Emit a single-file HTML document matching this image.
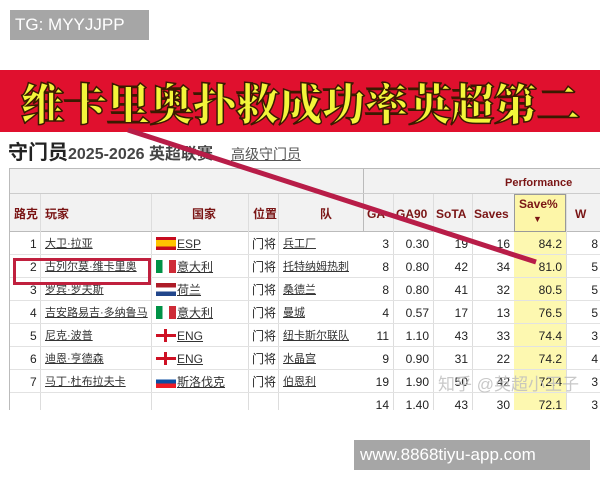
<!DOCTYPE html>
<html><head><meta charset="utf-8"><style>
*{margin:0;padding:0;box-sizing:border-box}
body{width:600px;height:480px;background:#fff;position:relative;overflow:hidden;font-family:"Liberation Sans","Noto Sans CJK SC",sans-serif}
.a{position:absolute}
.tg{left:10px;top:10px;width:139px;height:30px;background:#a6a6a6;color:#fff;font-size:17px;line-height:30px;padding-left:5px}
.ban{left:0;top:70px;width:600px;height:62px;background:#e0102e;color:#f3f53a;font-size:44px;font-weight:900;line-height:62px;text-align:center;letter-spacing:-1px;font-family:"Noto Serif CJK SC","Noto Sans CJK SC",serif;-webkit-text-stroke:1.5px #3a1a00;white-space:nowrap}
.tt{left:8px;top:136px;font-size:20px;font-weight:bold;color:#222;white-space:nowrap}
.tt span{font-size:16px;color:#444}
.tt u{font-size:14px;font-weight:normal;color:#555;margin-left:18px}
.tb{left:9px;top:168px;width:591px;height:242px;overflow:hidden;border-left:1px solid #bbb;border-top:1px solid #bbb}
.c{position:absolute;font-size:12px;line-height:14px;height:14px;color:#222;white-space:nowrap}
.h{color:#7a1515;font-weight:bold}
.l{text-decoration:underline;color:#333}
</style></head><body>
<div class="a tg">TG: MYYJJPP</div>
<div class="a ban">维卡里奥扑救成功率英超第二</div>
<div class="a tt">守门员<span>2025-2026 英超联赛</span><u>高级守门员</u></div>
<div class="a tb">
<div class="a" style="left:0;top:0;width:353px;height:63px;background:#f2f2f2;border-bottom:1px solid #bbb"></div>
<div class="a" style="left:0;top:24px;width:353px;height:1px;background:#ccc"></div>
<div class="a" style="left:353px;top:0;width:240px;height:63px;background:#f2f2f2;border-left:1px solid #bbb;border-bottom:1px solid #bbb"></div>
<div class="a" style="left:353px;top:24px;width:240px;height:1px;background:#ccc"></div>
<div class="a" style="left:504px;top:25px;width:52px;height:217px;background:#fdf8b0"></div>
<div class="a" style="left:504px;top:25px;width:52px;height:38px;border:1px solid #999;background:#fdf6a8"></div>
<div class="c h" style="left:495px;top:7px;font-size:11px">Performance</div>
<div class="c h" style="left:4px;top:38px">路克</div>
<div class="c h" style="left:35px;top:38px">玩家</div>
<div class="c h" style="left:182px;top:38px">国家</div>
<div class="c h" style="left:243px;top:38px">位置</div>
<div class="c h" style="left:310px;top:38px">队</div>
<div class="c h" style="left:357px;top:38px">GA</div>
<div class="c h" style="left:386px;top:38px">GA90</div>
<div class="c h" style="left:426px;top:38px">SoTA</div>
<div class="c h" style="left:464px;top:38px">Saves</div>
<div class="c h" style="left:509px;top:28px">Save%</div>
<div class="c h" style="left:523px;top:43px;font-size:9px">▼</div>
<div class="c h" style="left:565px;top:38px">W</div>
<div class="a" style="left:30px;top:25px;width:1px;height:220px;background:#ddd"></div>
<div class="a" style="left:141px;top:25px;width:1px;height:220px;background:#ddd"></div>
<div class="a" style="left:238px;top:25px;width:1px;height:220px;background:#ddd"></div>
<div class="a" style="left:268px;top:25px;width:1px;height:220px;background:#ddd"></div>
<div class="a" style="left:383px;top:25px;width:1px;height:220px;background:#ddd"></div>
<div class="a" style="left:423px;top:25px;width:1px;height:220px;background:#ddd"></div>
<div class="a" style="left:462px;top:25px;width:1px;height:220px;background:#ddd"></div>
<div class="a" style="left:556px;top:25px;width:1px;height:220px;background:#ddd"></div>
<div id="rows"></div>
</div>
<div class="a" style="left:13px;top:258px;width:138px;height:27px;border:3px solid #c0203e"></div>
<svg class="a" style="left:0;top:0" width="600" height="480"><line x1="128" y1="130" x2="536" y2="262" stroke="#b81d48" stroke-width="5"/></svg>
<div class="a" style="left:438px;top:370px;font-size:17px;color:rgba(190,190,190,.85);white-space:nowrap">知乎 @英超小王子</div>
<div class="a" style="left:354px;top:440px;width:236px;height:30px;background:#a6a6a6;color:#fff;font-size:17px;line-height:30px;padding-left:6px">www.8868tiyu-app.com</div>
<script>
var d=[["1","大卫·拉亚","ESP","兵工厂","3","0.30","19","16","84.2","8","es"],
["2","古列尔莫·维卡里奥","意大利","托特纳姆热刺","8","0.80","42","34","81.0","5","it"],
["3","罗宾·罗夫斯","荷兰","桑德兰","8","0.80","41","32","80.5","5","nl"],
["4","吉安路易吉·多纳鲁马","意大利","曼城","4","0.57","17","13","76.5","5","it"],
["5","尼克·波普","ENG","纽卡斯尔联队","11","1.10","43","33","74.4","3","en"],
["6","迪恩·亨德森","ENG","水晶宫","9","0.90","31","22","74.2","4","en"],
["7","马丁·杜布拉夫卡","斯洛伐克","伯恩利","19","1.90","50","42","72.4","3","sk"],
["8","","","","14","1.40","43","30","72.1","3",""]];
var h="";
d.forEach(function(r,i){var t=63+i*23;
h+='<div class="a" style="left:0;top:'+(t+22)+'px;width:600px;height:1px;background:#e2e2e2"></div>';
var y=t+5;
if(r[1]){h+='<div class="c" style="left:20px;top:'+y+'px">'+r[0]+'</div><div class="c l" style="left:35px;top:'+y+'px;font-size:11px">'+r[1]+'</div>';
var f=r[10],fl='';
if(f=="es")fl='<div class="a" style="left:146px;top:'+(t+5)+'px;width:20px;height:13px;background:linear-gradient(#c60b1e 25%,#ffc400 25%,#ffc400 75%,#c60b1e 75%)"></div>';
if(f=="it")fl='<div class="a" style="left:146px;top:'+(t+5)+'px;width:20px;height:13px;background:linear-gradient(90deg,#009246 33%,#fff 33%,#fff 66%,#ce2b37 66%)"></div>';
if(f=="nl")fl='<div class="a" style="left:146px;top:'+(t+5)+'px;width:20px;height:13px;background:linear-gradient(#ae1c28 33%,#fff 33%,#fff 66%,#21468b 66%)"></div>';
if(f=="en")fl='<div class="a" style="left:146px;top:'+(t+5)+'px;width:20px;height:13px;background:linear-gradient(#fff 40%,#ce1124 40%,#ce1124 60%,#fff 60%)"></div><div class="a" style="left:154px;top:'+(t+5)+'px;width:3px;height:13px;background:#ce1124"></div>';
if(f=="sk")fl='<div class="a" style="left:146px;top:'+(t+5)+'px;width:20px;height:13px;background:linear-gradient(#fff 33%,#0b4ea2 33%,#0b4ea2 66%,#ee1c25 66%)"></div>';
h+=fl+'<div class="c l" style="left:167px;top:'+y+'px">'+r[2]+'</div><div class="c" style="left:242px;top:'+y+'px">门将</div><div class="c l" style="left:273px;top:'+y+'px;font-size:11px">'+r[3]+'</div>';}
var rc=[[380,4],[420,5],[459,6],[501,7],[553,8],[589,9]];
rc.forEach(function(c){h+='<div class="c" style="right:'+(591-c[0])+'px;top:'+y+'px">'+r[c[1]]+'</div>';});
});
document.getElementById("rows").innerHTML=h;
</script>
</body></html>
